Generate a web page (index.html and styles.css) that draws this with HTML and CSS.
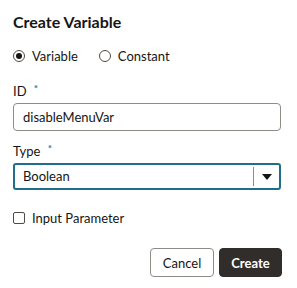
FILE: index.html
```html
<!DOCTYPE html>
<html lang="en">
<head>
    <meta charset="UTF-8">
    <title>Create Variable</title>
    <link rel="stylesheet" href="styles.css">
</head>
<body>
    <div class="dialog">
        <h1 class="title">Create Variable</h1>

        <div class="radio-group">
            <label class="radio"><span class="radio-dot checked"></span>Variable</label>
            <label class="radio"><span class="radio-dot"></span>Constant</label>
        </div>

        <div class="field first">
            <div class="field-label">ID <span class="req">*</span></div>
            <div class="text-input">disableMenuVar</div>
        </div>

        <div class="field">
            <div class="field-label">Type <span class="req">*</span></div>
            <div class="select">
                <span class="select-value">Boolean</span>
                <span class="select-arrow">
                    <svg width="10" height="6" viewBox="0 0 10 6"><path d="M0 0h10L5 6z" fill="#161513"/></svg>
                </span>
            </div>
        </div>

        <label class="checkbox"><span class="box"></span>Input Parameter</label>

        <div class="actions">
            <button class="btn cancel">Cancel</button>
            <button class="btn primary">Create</button>
        </div>
    </div>
</body>
</html>
```

FILE: styles.css
```css
body {
    margin: 0;
    background-color: #fff;
    font-family: Lato, sans-serif;
    font-size: 13px;
    color: #161513;
}
.dialog {
    width: 268px;
    padding: 12px 16px 0 13px;
}
.title {
    margin: 0;
    font-size: 16px;
    font-weight: 700;
    line-height: 20px;
}
.radio-group {
    display: flex;
    gap: 21px;
    margin-top: 16px;
}
.radio {
    display: flex;
    align-items: center;
    gap: 7px;
    line-height: 16px;
}
.radio-dot {
    width: 10px;
    height: 10px;
    border: 1px solid #4f4a46;
    border-radius: 50%;
    position: relative;
}
.radio-dot.checked::after {
    content: "";
    position: absolute;
    left: 2px;
    top: 2px;
    width: 6px;
    height: 6px;
    border-radius: 50%;
    background-color: #161513;
}
.field {
    margin-top: 11px;
}
.field.first {
    margin-top: 18px;
}
.field-label {
    line-height: 18px;
    margin-bottom: 3px;
}
.req {
    color: #227e9e;
    font-size: 10px;
    font-weight: 700;
    vertical-align: top;
    line-height: 12px;
    margin-left: 4px;
}
.text-input {
    height: 26px;
    line-height: 26px;
    border: 1px solid #8f8b87;
    border-radius: 4px;
    padding: 0 9px;
}
.select {
    display: flex;
    height: 23px;
    border: 2px solid #1f6e8c;
    border-radius: 3px;
}
.select-value {
    flex: 1;
    line-height: 23px;
    padding-left: 8px;
}
.select-arrow {
    width: 25px;
    display: flex;
    align-items: center;
    justify-content: center;
    border-left: 1px solid #8f8b87;
    margin: 2px 0;
}
.checkbox {
    display: flex;
    align-items: center;
    gap: 7px;
    margin-top: 20px;
    line-height: 16px;
}
.box {
    width: 10px;
    height: 10px;
    border: 1px solid #4f4a46;
    border-radius: 2px;
}
.actions {
    display: flex;
    justify-content: flex-end;
    gap: 5px;
    margin-top: 22px;
    margin-right: -1px;
}
.btn {
    height: 29px;
    padding: 0;
    font-family: inherit;
    font-size: 13px;
    color: #161513;
    background-color: #fff;
    border: 1px solid #8f8b87;
    border-radius: 4px;
}
.cancel {
    width: 64px;
}
.primary {
    width: 63px;
    background-color: #312d2a;
    border-color: #312d2a;
    color: #fff;
    font-weight: 700;
}
```
